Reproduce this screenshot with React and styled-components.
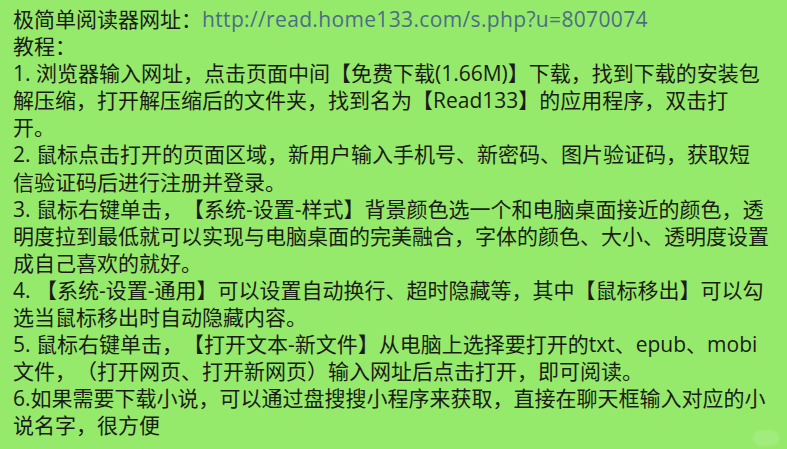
import React from 'react';
import styled, { createGlobalStyle } from 'styled-components';

const GlobalStyle = createGlobalStyle`
    html, body {
        margin: 0;
        padding: 0;
        background: #96ea6b;
    }
`

const steps = [
    ['1. 浏览器输入网址，点击页面中间【免费下载(1.66M)】下载，找到下载的安装包', '解压缩，打开解压缩后的文件夹，找到名为【Read133】的应用程序，双击打', '开。'],
    ['2. 鼠标点击打开的页面区域，新用户输入手机号、新密码、图片验证码，获取短', '信验证码后进行注册并登录。'],
    ['3. 鼠标右键单击，【系统-设置-样式】背景颜色选一个和电脑桌面接近的颜色，透', '明度拉到最低就可以实现与电脑桌面的完美融合，字体的颜色、大小、透明度设置', '成自己喜欢的就好。'],
    ['4. 【系统-设置-通用】可以设置自动换行、超时隐藏等，其中【鼠标移出】可以勾', '选当鼠标移出时自动隐藏内容。'],
    ['5. 鼠标右键单击，【打开文本-新文件】从电脑上选择要打开的txt、epub、mobi', '文件，（打开网页、打开新网页）输入网址后点击打开，即可阅读。'],
    ['6.如果需要下载小说，可以通过盘搜搜小程序来获取，直接在聊天框输入对应的小', '说名字，很方便'],
];

function App() {
  return (
    <Page>
        <GlobalStyle />
        <Line>极简单阅读器网址：<Link>http://read.home133.com/s.php?u=8070074</Link></Line>
        <Line>教程：</Line>
        {steps.map((lines, i) => (
            <Step key={i}>
                {lines.map((l, j) => <Line key={j}>{l}</Line>)}
            </Step>
        ))}
        <Watermark />
    </Page>
  );
}

export default App;


const Page = styled.div`
    position: relative;
    width: 787px;
    height: 449px;
    box-sizing: border-box;
    padding: 6px 0 0 13px;
    background: #96ea6b;
    color: #1b1b17;
    font-family: "Open Sans", "Noto Sans CJK SC", sans-serif;
    font-size: 21px;
    line-height: 27.1px;
    overflow: hidden;
    text-spacing-trim: space-all;
    font-feature-settings: "halt" 0, "chws" 0;
`

const Line = styled.div`
    white-space: nowrap;
`

const Link = styled.span`
    color: #4b6e86;
    letter-spacing: 0.35px;
`

const Step = styled.div`
    display: flex;
    flex-direction: column;
`

const Watermark = styled.div`
    position: absolute;
    right: 8px;
    bottom: 3px;
    width: 26px;
    height: 16px;
    border-radius: 8px;
    background: rgba(255, 255, 255, 0.12);
    filter: blur(1px);
`
